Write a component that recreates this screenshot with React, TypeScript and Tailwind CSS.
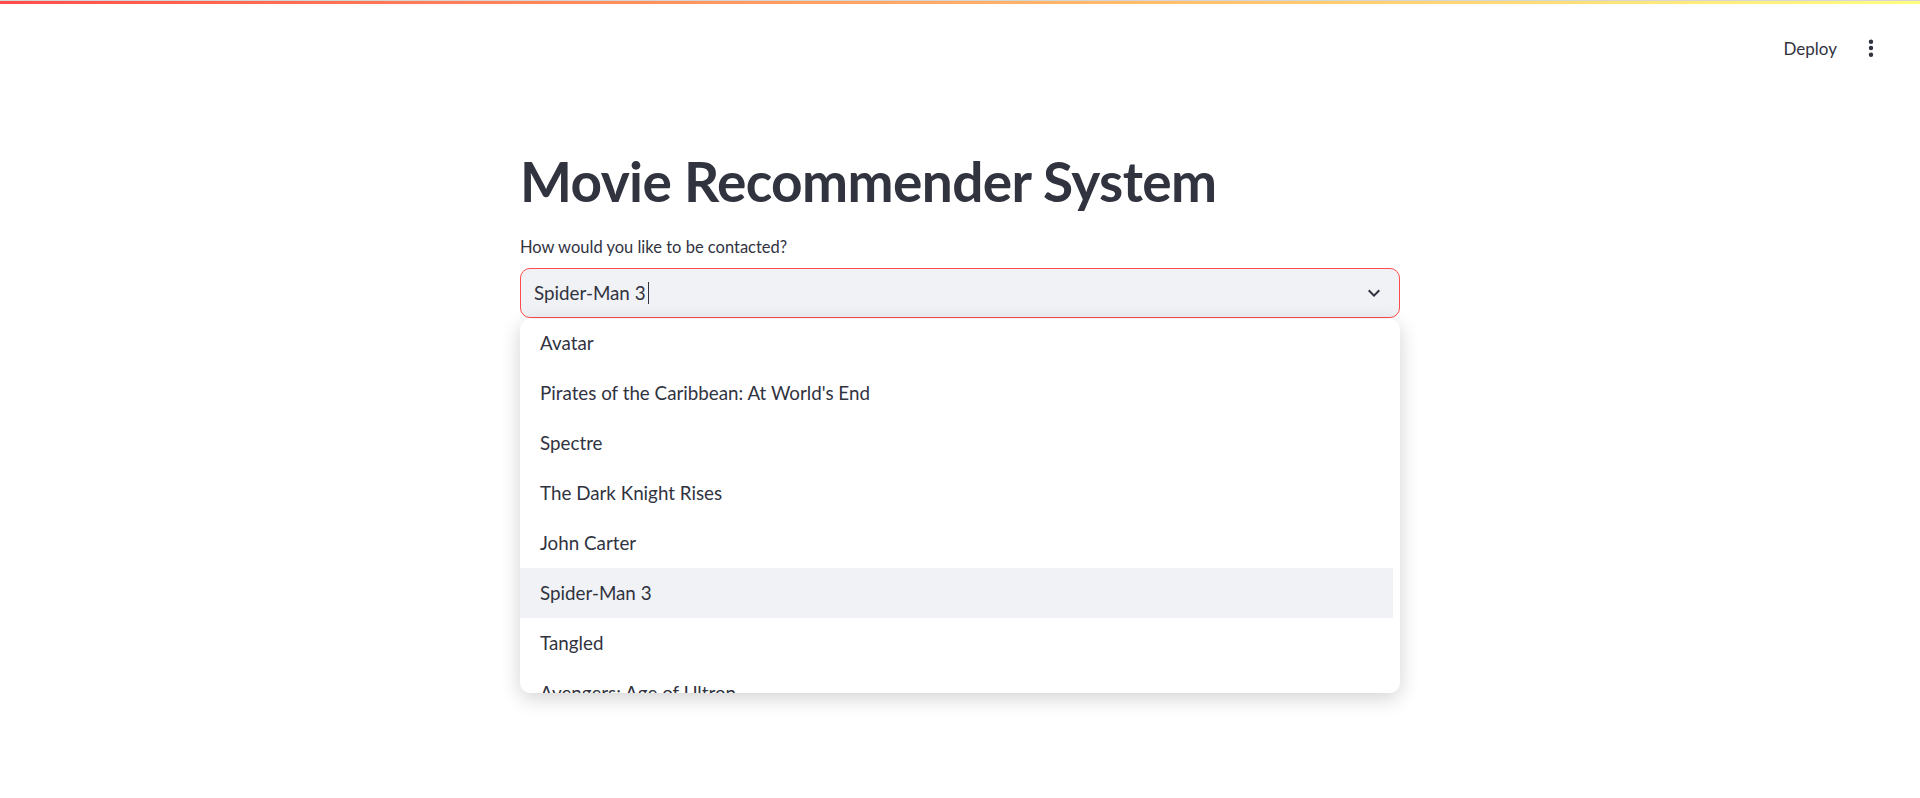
import { useState } from "react";

const movies = [
  "Avatar",
  "Pirates of the Caribbean: At World's End",
  "Spectre",
  "The Dark Knight Rises",
  "John Carter",
  "Spider-Man 3",
  "Tangled",
  "Avengers: Age of Ultron",
];

function ExpandMore() {
  return (
    <svg width="24" height="24" viewBox="0 0 24 24" fill="#31333f">
      <path d="M16.59 8.59 12 13.17 7.41 8.59 6 10l6 6 6-6z" />
    </svg>
  );
}

function MoreVert() {
  return (
    <svg width="18" height="24" viewBox="0 0 18 24" fill="#31333f">
      <circle cx="9" cy="5.7" r="2.2" />
      <circle cx="9" cy="12" r="2.2" />
      <circle cx="9" cy="18.7" r="2.2" />
    </svg>
  );
}

export default function App() {
  const [selected] = useState("Spider-Man 3");

  return (
    <div
      className="min-h-[798px] bg-white text-[#31333f]"
      style={{ fontFamily: "Lato, 'Noto Sans', sans-serif" }}
    >
      {/* decoration bar */}
      <div className="h-[1px] bg-[#d6d6d6]" />
      <div className="h-[3px] bg-gradient-to-r from-[#ff4b4b] to-[#fffd80]" />

      {/* header */}
      <header className="flex h-[88px] items-center justify-end pr-[40px]">
        <span className="text-[17px] leading-none">Deploy</span>
        <div className="ml-[25px] flex items-center">
          <MoreVert />
        </div>
      </header>

      <main className="mx-auto w-[880px] pt-[56px]">
        <h1 className="text-[55px] font-bold leading-[66px] tracking-[-0.6px]">
          Movie Recommender System
        </h1>

        <div className="mt-[21px] h-[24px] text-[16.5px] leading-[24px]">
          How would you like to be contacted?
        </div>

        <div className="mt-[9px] flex h-[50px] items-center rounded-[10px] border border-[#ff4b4b] bg-[#f0f2f6] pl-[13px] pr-[13px]">
          <div className="flex flex-1 items-center text-[18.8px]">
            <span>{selected}</span>
            <span className="ml-[2px] h-[22px] w-[1px] bg-[#31333f]" />
          </div>
          <ExpandMore />
        </div>

        <div className="mt-[1px] h-[374px] overflow-hidden rounded-[10px] bg-white pr-[7px] shadow-[0_5px_20px_rgba(0,0,0,0.18)]">
          <ul className="-mt-[1px]">
            {movies.map((m) => (
              <li
                key={m}
                className={`flex h-[50px] items-center pl-[20px] text-[18.8px] ${
                  m === selected ? "bg-[#f0f2f6]" : ""
                }`}
              >
                {m}
              </li>
            ))}
          </ul>
        </div>
      </main>
    </div>
  );
}
